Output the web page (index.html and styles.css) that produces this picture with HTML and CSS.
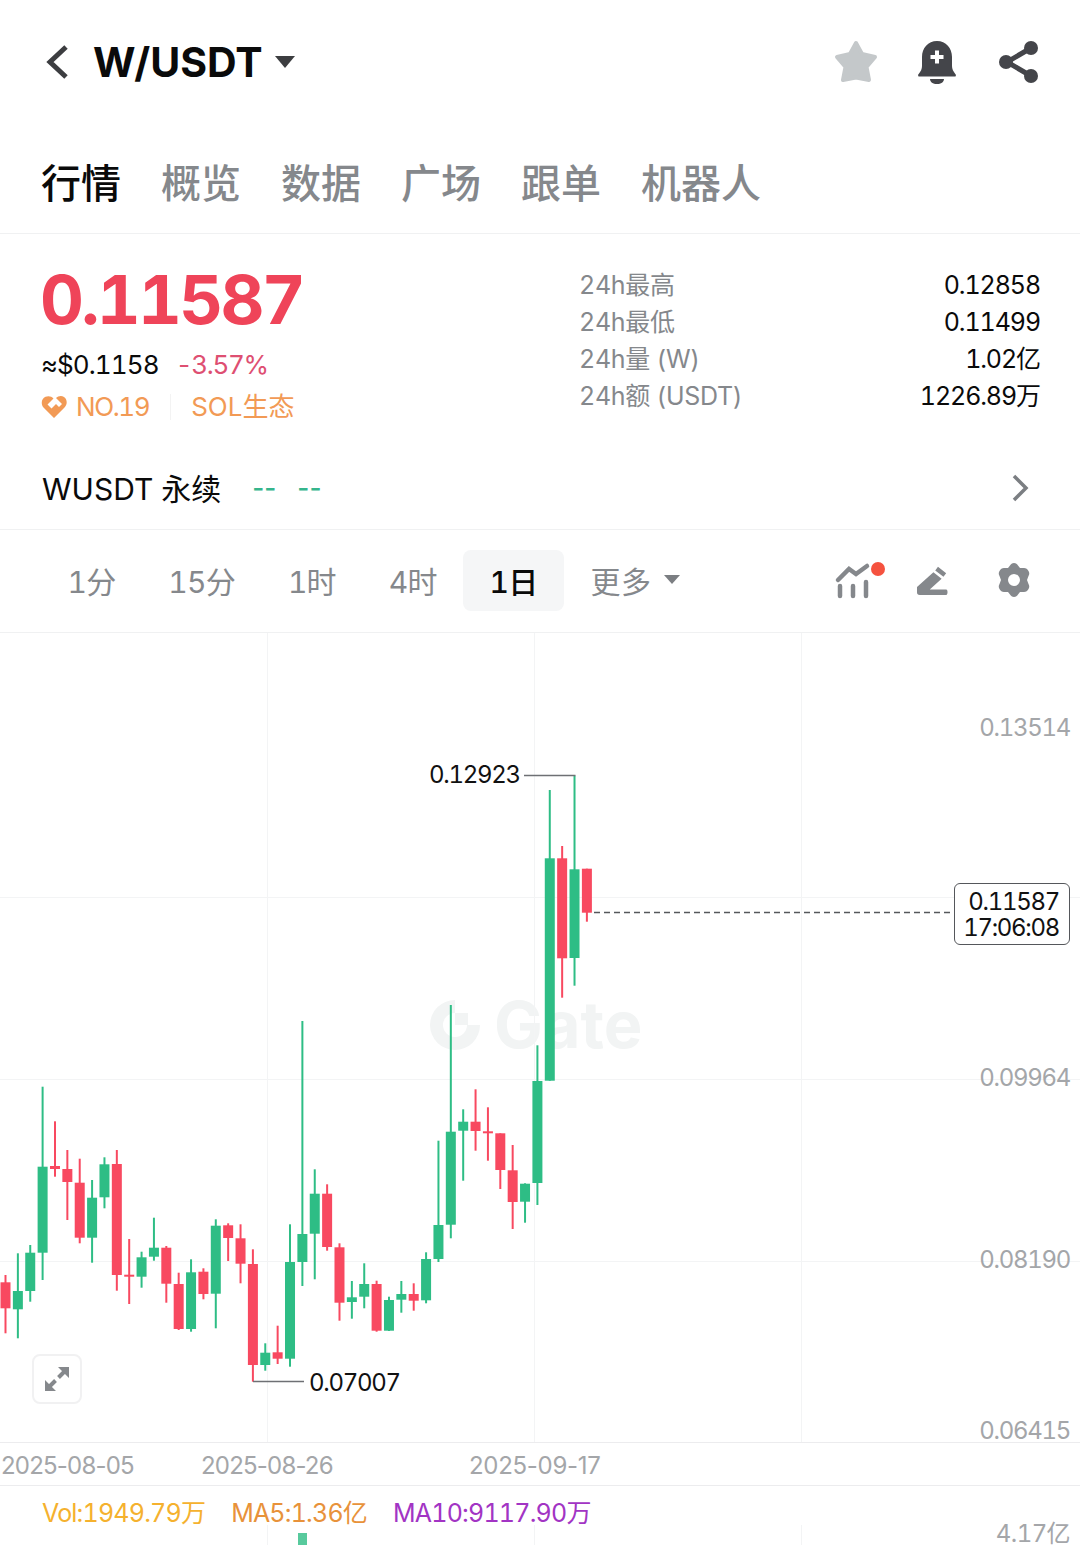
FILE: index.html
```html
<!DOCTYPE html>
<html lang="en">
<head>
    <meta charset="UTF-8">
    <title>W/USDT</title>
    <link rel="stylesheet" href="styles.css">
</head>
<body>
    <header class="top">
        <div class="pair">
            <svg class="back" width="26" height="36" viewBox="0 0 26 36"><path d="M21 3 L5 18 L21 33" /></svg>
            <span class="pair-name">W/USDT</span>
            <span class="caret-big"></span>
        </div>
        <div class="top-icons">
            <svg width="46" height="46" viewBox="0 0 46 46"><path class="star" d="M23 4 L29 15 L42 18 L33.500 28 L36 41 L23 38.500 L10 41 L12.500 28 L4 18 L17 15 Z" /></svg>
            <svg class="bell" width="44" height="46" viewBox="0 0 44 46"><path class="dark" d="M22 2 C31 2 37 9 37 18 L37 27 C37 30 38 32 41 36 L40.500 37.500 L3.500 37.500 L3 36 C6 32 7 30 7 27 L7 18 C7 9 13 2 22 2 Z M15 40 L29 40 C29 43 26 45 22 45 C18 45 15 43 15 40 Z" /><path class="plus" d="M22 11.500 V24.500 M15.500 18 H28.500" /></svg>
            <svg width="42" height="44" viewBox="0 0 42 44"><path class="share-line" d="M33 8 L9 22 L33 36" /><circle class="dark" cx="33" cy="8" r="7" /><circle class="dark" cx="8" cy="22" r="7" /><circle class="dark" cx="33" cy="36" r="7" /></svg>
        </div>
    </header>

    <nav class="tabs">
        <a class="tab active">行情</a>
        <a class="tab">概览</a>
        <a class="tab">数据</a>
        <a class="tab">广场</a>
        <a class="tab">跟单</a>
        <a class="tab">机器人</a>
    </nav>

    <section class="summary">
        <div class="summary-left">
            <div class="price">0.11587</div>
            <div class="price-sub">
                <span class="usd">≈$0.1158</span>
                <span class="change">-3.57%</span>
            </div>
            <div class="badges">
                <svg width="26" height="24" viewBox="0 0 26 24"><path class="heart" d="M13 23 L2.500 12.500 C-0.500 9 0.500 3.500 4.500 1.800 C7.500 0.500 10.500 1.300 12.500 3.500 L6.500 9.500 L10.500 13.500 L15 9 L18 12 L21 9 L15 3 C17 1 20.500 0.300 23 2 C26.500 4.500 26.500 9.500 23.500 12.500 Z" /></svg>
                <span class="rank">NO.19</span>
                <span class="badge-sep"></span>
                <span>SOL生态</span>
            </div>
        </div>
        <dl class="stats">
            <div class="stat"><dt>24h最高</dt><dd>0.12858</dd></div>
            <div class="stat"><dt>24h最低</dt><dd>0.11499</dd></div>
            <div class="stat"><dt>24h量 (W)</dt><dd>1.02亿</dd></div>
            <div class="stat"><dt>24h额 (USDT)</dt><dd>1226.89万</dd></div>
        </dl>
    </section>

    <section class="perp">
        <span class="perp-name">WUSDT 永续</span>
        <span class="perp-val">--</span>
        <span class="perp-val">--</span>
        <svg class="perp-arrow" width="18" height="28" viewBox="0 0 18 28"><path d="M3 2 L15 14 L3 26" /></svg>
    </section>

    <section class="periods">
        <a class="period">1分</a>
        <a class="period">15分</a>
        <a class="period">1时</a>
        <a class="period">4时</a>
        <a class="period selected">1日</a>
        <a class="period more">更多<span class="caret-small"></span></a>
        <div class="period-icons">
            <svg width="42" height="42" viewBox="0 0 42 42"><path class="tool-line" d="M4 21 L15 10 L22 15 L33 7" /><path class="tool-bar" d="M6 27 V37 M19 27 V37 M32 23 V37" /><circle class="dot" cx="44" cy="10" r="7" /></svg>
            <svg class="pen" width="33" height="31" viewBox="0 0 36 34"><path class="tool" d="M24 2 L33 9 L30 13 L21 6 Z M19 8 L28 15 L15 27 L33 27 C35 27 35 33 33 33 L4 33 C2 33 1 32 1 30 L1 24 Z" /></svg>
            <svg width="34" height="36" viewBox="0 0 34 36"><path class="tool" fill-rule="evenodd" d="M17 1 C19 1 20 2 21 3.500 L23 6 L27 6 C29 6 30.500 7 31.500 9 C32.500 11 32.500 12 31.500 14 L30 18 L31.500 22 C32.500 24 32.500 25 31.500 27 C30.500 29 29 30 27 30 L23 30 L21 32.500 C20 34 19 35 17 35 C15 35 14 34 13 32.500 L11 30 L7 30 C5 30 3.500 29 2.500 27 C1.500 25 1.500 24 2.500 22 L4 18 L2.500 14 C1.500 12 1.500 11 2.500 9 C3.500 7 5 6 7 6 L11 6 L13 3.500 C14 2 15 1 17 1 Z M17 12 A6 6 0 1 0 17 24 A6 6 0 1 0 17 12 Z" /></svg>
        </div>
    </section>

    <section class="chart">
        <div class="watermark">
            <svg class="wm-logo" width="50" height="50" viewBox="0 0 50 50"><path d="M25 0 A25 25 0 1 0 50 25 L37 25 A12 12 0 1 1 25 13 Z M25 13 H38 V25 H25 Z" /></svg>
            Gate
        </div>

        <svg id="candles" class="candles" width="1080" height="912" viewBox="0 633 1080 912"></svg>

        <span class="axis-y y1">0.13514</span>
        <span class="axis-y y2">0.09964</span>
        <span class="axis-y y3">0.08190</span>
        <span class="axis-y y4">0.06415</span>
        <span class="axis-y y5">4.17亿</span>

        <span class="mark mark-high">0.12923</span>
        <span class="mark mark-low">0.07007</span>

        <div class="now-tag">0.11587<br>17:06:08</div>

        <button class="expand">
            <svg width="26" height="26" viewBox="0 0 26 26"><path class="expand-head" d="M14 1 H25 V12 Z M1 14 V25 H12 Z" /><path class="expand-stem" d="M20 6 L14.500 11.500 M6 20 L11.500 14.500" /></svg>
        </button>

        <span class="axis-x x1">2025-08-05</span>
        <span class="axis-x x2">2025-08-26</span>
        <span class="axis-x x3">2025-09-17</span>

        <div class="legend">
            <span class="vol">Vol:1949.79万</span>
            <span class="ma5">MA5:1.36亿</span>
            <span class="ma10">MA10:9117.90万</span>
        </div>
    </section>
    <script src="chart.js"></script>
</body>
</html>
```
FILE: styles.css
```css
* {
    padding: 0;
    margin: 0;
    box-sizing: border-box;
}

body {
    background: #fff;
    width: 1080px;
    height: 1545px;
    overflow: hidden;
    font-family: Inter, "Noto Sans CJK SC", sans-serif;
    font-variant-numeric: tabular-nums;
    color: #0a0a0a;
}

/* top bar */
.top {
    height: 124px;
    padding: 0 40px 0 45px;
    display: flex;
    align-items: center;
    justify-content: space-between;
}

.pair {
    display: flex;
    align-items: center;
}

.back {
    fill: none;
    stroke: #3c3d40;
    stroke-width: 5;
    margin-right: 22px;
}

.pair-name {
    font-size: 41px;
    font-weight: 700;
}

.caret-big {
    width: 0;
    height: 0;
    margin-left: 12px;
    border-left: 10px solid transparent;
    border-right: 10px solid transparent;
    border-top: 12px solid #3c3d40;
}

.top-icons {
    display: flex;
    align-items: center;
    gap: 36px;
}

.bell {
    margin-right: 3px;
}

.star {
    fill: #c4c8ca;
    stroke: #c4c8ca;
    stroke-width: 4;
    stroke-linejoin: round;
}

.dark {
    fill: #44454a;
}

.plus {
    fill: none;
    stroke: #fff;
    stroke-width: 4;
}

.share-line {
    fill: none;
    stroke: #44454a;
    stroke-width: 5;
}

/* tabs */
.tabs {
    height: 110px;
    padding: 0 0 0 41px;
    display: flex;
    align-items: center;
    gap: 40px;
    border-bottom: 1px solid #f0f1f2;
}

.tab {
    font-size: 40px;
    color: #85888c;
    line-height: 40px;
    font-weight: 500;
    margin-top: 10px;
}

.tab.active {
    color: #0a0a0a;
}

/* price block */
.summary {
    height: 190px;
    padding: 36px 40px 0 41px;
    display: flex;
    justify-content: space-between;
}

.price {
    font-size: 68px;
    font-weight: 700;
    line-height: 58px;
    letter-spacing: -2.700px;
    margin-left: -1px;
    color: #ef4459;
}

.price-sub {
    margin-top: 21px;
    display: flex;
    gap: 17px;
    font-size: 26px;
    line-height: 32px;
}

.usd {
    letter-spacing: -0.900px;
}

.change {
    color: #de4f72;
    letter-spacing: -1.300px;
}

.badges {
    margin-top: 10px;
    display: flex;
    align-items: center;
    font-size: 26px;
    line-height: 32px;
    color: #f29a55;
}

.heart {
    fill: #f29a55;
}

.rank {
    margin-left: 9px;
    letter-spacing: -1.400px;
}

.badge-sep {
    width: 1px;
    height: 26px;
    background: #f3f3f3;
    margin: 0 20px 0 21px;
}

.stats {
    width: 461px;
    margin-top: -1px;
    display: flex;
    flex-direction: column;
    gap: 5px;
}

.stat {
    display: flex;
    justify-content: space-between;
    font-size: 25px;
    line-height: 32px;
}

.stat dt {
    color: #85888c;
    letter-spacing: -0.300px;
}

.stat dd {
    letter-spacing: -1.100px;
}

/* perpetual row */
.perp {
    height: 106px;
    padding: 21px 51px 0 42px;
    display: flex;
    align-items: center;
    border-bottom: 1px solid #f0f1f2;
}

.perp-name {
    font-size: 30px;
    margin-right: 31px;
}

.perp-val {
    font-size: 26px;
    font-weight: 500;
    font-variant-numeric: normal;
    color: #35b58c;
    margin-right: 21px;
}

.perp-arrow {
    margin: 2px 0 0 auto;
    fill: none;
    stroke: #7b7e82;
    stroke-width: 3.500;
}

/* period selector */
.periods {
    height: 103px;
    padding: 0 49px 2px 41px;
    display: flex;
    align-items: center;
    border-bottom: 1px solid #f0f1f2;
}

.period {
    height: 61px;
    padding: 0 26.500px 1px;
    display: flex;
    align-items: center;
    font-size: 30px;
    letter-spacing: -0.800px;
    color: #85888c;
    border-radius: 8px;
}

.period.selected {
    color: #0a0a0a;
    font-weight: 500;
    background: #f5f6f7;
}

.period.more {
    letter-spacing: 0.500px;
}

.caret-small {
    width: 0;
    height: 0;
    margin-left: 13px;
    border-left: 8px solid transparent;
    border-right: 8px solid transparent;
    border-top: 9px solid #7b7e82;
}

.period-icons {
    margin-left: auto;
    display: flex;
    align-items: center;
    gap: 40px;
}

.period-icons svg {
    overflow: visible;
}

.pen {
    margin-right: 8px;
}

.tool {
    fill: #85888c;
}

.tool-line,
.tool-bar {
    fill: none;
    stroke: #85888c;
    stroke-width: 4.500;
    stroke-linecap: round;
}

.dot {
    fill: #f5523f;
}

/* chart canvas */
.chart {
    position: relative;
    height: 912px;
}

.candles {
    position: absolute;
    top: 0;
    left: 0;
}

.grid {
    stroke: #f3f4f5;
    stroke-width: 1;
}

.border {
    stroke: #ececee;
    stroke-width: 1;
}

.up {
    fill: #2ebd85;
    stroke: #2ebd85;
}

.down {
    fill: #f84960;
    stroke: #f84960;
}

.wick {
    stroke-width: 2;
}

.guide {
    fill: none;
    stroke: #6e7074;
    stroke-width: 1.500;
}

.now-line {
    stroke: #55575b;
    stroke-width: 1.500;
    stroke-dasharray: 6 4;
}

.watermark {
    position: absolute;
    left: 430px;
    top: 359px;
    display: flex;
    align-items: center;
    gap: 14px;
    font-size: 65px;
    line-height: 66px;
    font-weight: 700;
    font-variant-numeric: normal;
    color: #f2f4f4;
}

.wm-logo {
    fill: #f2f4f4;
}

.axis-y {
    position: absolute;
    right: 10px;
    font-size: 24px;
    line-height: 28px;
    letter-spacing: -1.300px;
    color: #a4a6a9;
}

.y1 { top: 81px; }
.y2 { top: 431px; }
.y3 { top: 613px; }
.y4 { top: 784px; }
.y5 { top: 887px; letter-spacing: -0.600px; }

.mark {
    position: absolute;
    font-size: 24px;
    line-height: 28px;
    letter-spacing: -1.300px;
    color: #111;
}

.mark-high {
    left: 429px;
    top: 128px;
}

.mark-low {
    left: 309px;
    top: 736px;
}

.now-tag {
    position: absolute;
    left: 954px;
    top: 250px;
    width: 116px;
    height: 62px;
    border: 1px solid #55575b;
    border-radius: 6px;
    background: #fff;
    font-size: 24px;
    line-height: 26px;
    letter-spacing: -1.300px;
    padding: 5px 10px 0 0;
    text-align: right;
    color: #111;
}

.expand {
    position: absolute;
    left: 32px;
    top: 721px;
    width: 50px;
    height: 50px;
    display: flex;
    align-items: center;
    justify-content: center;
    background: #fff;
    border: 2px solid #f1f1f2;
    border-radius: 8px;
}

.expand-head {
    fill: #85888c;
}

.expand-stem {
    fill: none;
    stroke: #85888c;
    stroke-width: 4;
}

.axis-x {
    position: absolute;
    top: 819px;
    font-size: 24px;
    line-height: 28px;
    font-variant-numeric: normal;
    letter-spacing: -0.800px;
    color: #a4a6a9;
}

.x1 { left: 1px; }
.x2 { left: 201px; }
.x3 { left: 469px; letter-spacing: -0.300px; }

.legend {
    position: absolute;
    left: 42px;
    top: 865px;
    display: flex;
    gap: 26px;
    font-size: 25px;
    line-height: 30px;
    letter-spacing: -0.800px;
}

.vol { color: #f5b12e; }
.ma5 { color: #e8923a; }
.ma10 { color: #a234c4; }
```
FILE: chart.js
```js
// [color, wick top, body top, body bottom, wick bottom]
const candles = [
    ['d', 1275, 1282.3, 1308.3, 1333.3],
    ['u', 1253.3, 1291, 1309.3, 1338.3],
    ['u', 1245, 1252.7, 1291, 1301.7],
    ['u', 1086.7, 1166.7, 1252.7, 1280],
    ['d', 1121.3, 1166, 1169, 1176.7],
    ['d', 1150, 1169, 1182, 1220],
    ['d', 1158.7, 1182.7, 1237.7, 1243.3],
    ['u', 1180, 1197.7, 1237.7, 1262.7],
    ['u', 1157.3, 1164.3, 1197.3, 1208.3],
    ['d', 1150, 1164, 1275, 1290.7],
    ['d', 1239, 1274.7, 1276.7, 1304],
    ['u', 1251.7, 1257.3, 1276.7, 1287.7],
    ['u', 1217.7, 1247.7, 1256.7, 1260.7],
    ['d', 1246, 1247.7, 1283.7, 1302.7],
    ['d', 1272.7, 1284, 1329, 1330],
    ['u', 1259.3, 1272.3, 1329, 1331.7],
    ['d', 1268.3, 1271.7, 1294, 1299.3],
    ['u', 1219.3, 1225.7, 1293.7, 1328.3],
    ['d', 1223.3, 1225.3, 1238, 1261],
    ['d', 1224.3, 1238.3, 1263.7, 1283.3],
    ['d', 1249.3, 1264, 1365, 1381.7],
    ['u', 1343.3, 1352.7, 1365, 1370.7],
    ['d', 1325.7, 1352.3, 1358.7, 1364],
    ['u', 1224.3, 1262, 1358.7, 1366.7],
    ['u', 1021, 1234, 1262, 1286],
    ['u', 1169.3, 1193.7, 1233.7, 1279.3],
    ['d', 1184.3, 1193.7, 1247, 1250.7],
    ['d', 1243.3, 1247.3, 1302.7, 1320.7],
    ['u', 1281, 1297.3, 1302, 1318.7],
    ['u', 1263.3, 1284, 1296.7, 1308.3],
    ['d', 1280.7, 1284, 1330.7, 1331.7],
    ['u', 1296.7, 1300, 1330.7, 1331],
    ['u', 1281, 1294, 1299.7, 1312.7],
    ['d', 1283.3, 1294, 1300.7, 1310.7],
    ['u', 1252.3, 1259, 1300.3, 1303.3],
    ['u', 1140.7, 1225, 1259, 1262],
    ['u', 1005, 1131.7, 1224.7, 1238.3],
    ['u', 1109.3, 1121.7, 1130.7, 1180.7],
    ['d', 1089.3, 1121.7, 1131, 1150.7],
    ['d', 1107.3, 1131.3, 1132.7, 1160.7],
    ['d', 1133.3, 1133.3, 1170, 1189],
    ['d', 1145, 1170.3, 1202, 1229],
    ['u', 1183.3, 1183.7, 1201.7, 1222.7],
    ['u', 1045.3, 1081, 1183, 1205],
    ['u', 790, 858.3, 1080.7, 1080.7],
    ['d', 846, 858.3, 958.3, 997.7],
    ['u', 775.7, 869.3, 958, 985.7],
    ['d', 868.7, 868.7, 912.7, 921.7]
];

const NS = 'http://www.w3.org/2000/svg';
const svg = document.getElementById('candles');

function add(tag, cls, attrs) {
    const el = document.createElementNS(NS, tag);
    el.setAttribute('class', cls);
    for (const k in attrs) el.setAttribute(k, attrs[k]);
    svg.appendChild(el);
}

function line(cls, x1, y1, x2, y2) {
    add('line', cls, { x1, y1, x2, y2 });
}

// grid
[267.5, 534.5, 801.5].forEach(x => {
    line('grid', x, 633, x, 1442);
    line('grid', x, 1525, x, 1545);
});
[897.5, 1079.5, 1261.5].forEach(y => line('grid', 0, y, 1080, y));
line('border', 0, 1442.5, 1080, 1442.5);
line('border', 0, 1485.5, 1080, 1485.5);

// candles
candles.forEach((c, i) => {
    const x = 5.5 + i * 12.37;
    const cls = c[0] === 'u' ? 'up' : 'down';
    line(cls + ' wick', x, c[1], x, c[4]);
    add('rect', cls, { x: x - 5, y: c[2], width: 10, height: Math.max(c[3] - c[2], 2), 'stroke-width': 0 });
});

// high, low and last price guides
add('path', 'guide', { d: 'M524 775.5 H575.500', });
add('path', 'guide', { d: 'M253 1381.500 H304', });
line('now-line', 594, 912.5, 954, 912.5);

// volume bar peeking in at the bottom
add('rect', 'up', { x: 298, y: 1533, width: 9, height: 12, 'stroke-width': 0, opacity: 0.8 });
```
